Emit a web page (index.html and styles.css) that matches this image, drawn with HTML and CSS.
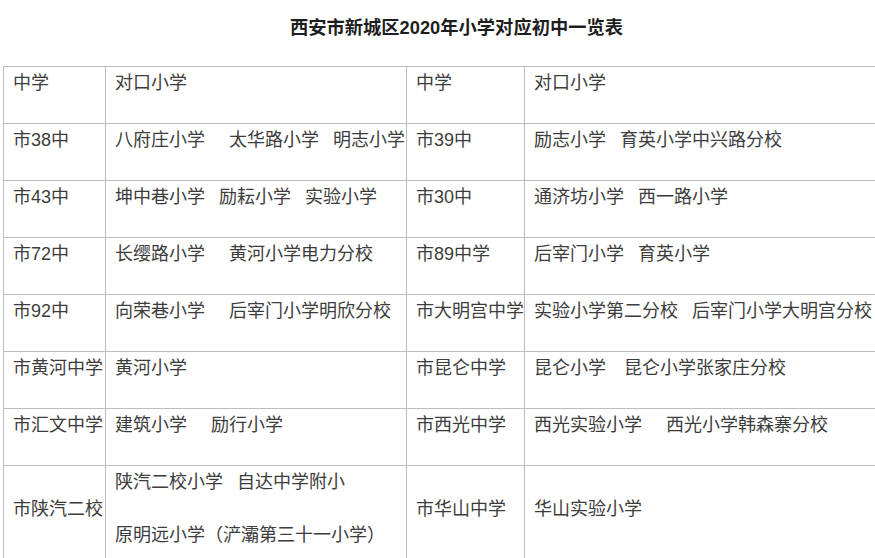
FILE: index.html
```html
<!DOCTYPE html>
<html lang="zh-CN">
<head>
<meta charset="utf-8">
<title>西安市新城区2020年小学对应初中一览表</title>
<link rel="stylesheet" href="styles.css">
</head>
<body>
<h1 class="title">西安市新城区2020年小学对应初中一览表</h1>
<table class="list">
  <colgroup>
    <col class="c1"><col class="c2"><col class="c3"><col class="c4">
  </colgroup>
  <tr>
    <td><p>中学</p></td>
    <td><p>对口小学</p></td>
    <td><p>中学</p></td>
    <td><p>对口小学</p></td>
  </tr>
  <tr>
    <td><p>市38中</p></td>
    <td><p>八府庄小学<span class="gl">太华路小学</span><span class="gs">明志小学</span></p></td>
    <td><p>市39中</p></td>
    <td><p>励志小学<span class="gs">育英小学中兴路分校</span></p></td>
  </tr>
  <tr>
    <td><p>市43中</p></td>
    <td><p>坤中巷小学<span class="gs">励耘小学</span><span class="gs">实验小学</span></p></td>
    <td><p>市30中</p></td>
    <td><p>通济坊小学<span class="gs">西一路小学</span></p></td>
  </tr>
  <tr>
    <td><p>市72中</p></td>
    <td><p>长缨路小学<span class="gl">黄河小学电力分校</span></p></td>
    <td><p>市89中学</p></td>
    <td><p>后宰门小学<span class="gs">育英小学</span></p></td>
  </tr>
  <tr>
    <td><p>市92中</p></td>
    <td><p>向荣巷小学<span class="gl">后宰门小学明欣分校</span></p></td>
    <td><p>市大明宫中学</p></td>
    <td><p>实验小学第二分校<span class="gs">后宰门小学大明宫分校</span></p></td>
  </tr>
  <tr>
    <td><p>市黄河中学</p></td>
    <td><p>黄河小学</p></td>
    <td><p>市昆仑中学</p></td>
    <td><p>昆仑小学<span class="gm">昆仑小学张家庄分校</span></p></td>
  </tr>
  <tr>
    <td><p>市汇文中学</p></td>
    <td><p>建筑小学<span class="gl">励行小学</span></p></td>
    <td><p>市西光中学</p></td>
    <td><p>西光实验小学<span class="gl">西光小学韩森寨分校</span></p></td>
  </tr>
  <tr>
    <td><p>市陕汽二校</p></td>
    <td><p>陕汽二校小学<span class="gs">自达中学附小</span></p><p>原明远小学（浐灞第三十一小学）</p></td>
    <td><p>市华山中学</p></td>
    <td><p>华山实验小学</p></td>
  </tr>
</table>
</body>
</html>
```

FILE: styles.css
```css
html, body {
  margin: 0;
  padding: 0;
  background: #ffffff;
}

body {
  font-family: "Liberation Sans", "Noto Sans CJK SC", sans-serif;
  color: #3c3c3c;
  width: 875px;
  overflow: hidden;
}

.title {
  margin: 0;
  padding: 14px 0 0 38px;
  height: 28px;
  line-height: 28px;
  font-size: 18.3px;
  font-weight: bold;
  color: #1e1e1e;
  text-align: center;
}

.list {
  margin: 24px 0 0 3px;
  width: 872px;
  table-layout: fixed;
  border-collapse: collapse;
  font-size: 18px;
}

.c1 { width: 102px; }
.c2 { width: 301px; }
.c3 { width: 118px; }
.c4 { width: 351px; }

.list td {
  border: 1px solid #bdbdbd;
  padding: 3px 0 0 9px;
  vertical-align: middle;
  white-space: nowrap;
  overflow: visible;
}

.list p {
  margin: 0 0 26px;
  line-height: 27px;
}

.gs { margin-left: 14px; }
.gm { margin-left: 18px; }
.gl { margin-left: 24px; }
```
